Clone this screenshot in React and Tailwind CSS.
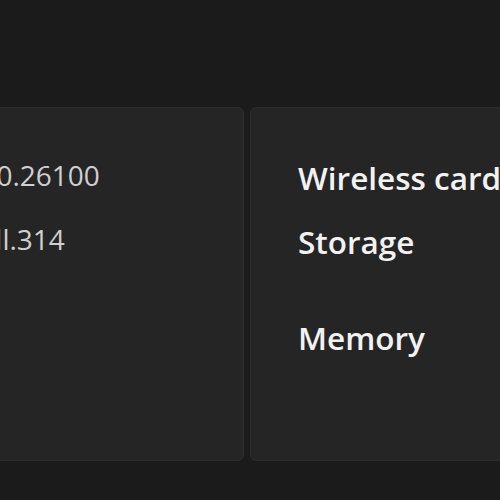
export default function App() {
  return (
    <div
      className="w-[500px] h-[500px] overflow-hidden bg-[#1b1b1b] pt-[107px]"
      style={{ fontFamily: '"Open Sans", "Noto Sans", sans-serif' }}
    >
      <div className="flex gap-[6px] h-[354px]">
        {/* Left card: build info, clipped by the window edge */}
        <div className="-ml-[120px] w-[364px] shrink-0 rounded-md bg-[#252525] border border-[#2c2c2c] pt-[52px] pl-[76px]">
          <div className="flex flex-col gap-[34px] text-[28px] leading-[30px] text-[#cfcfcf]">
            <span className="whitespace-nowrap">10.0.26100</span>
            <span className="whitespace-nowrap">HAll.314</span>
          </div>
        </div>

        {/* Right card: hardware list */}
        <div className="w-[300px] shrink-0 rounded-md bg-[#252525] border border-[#2c2c2c] pt-[53px] pl-[47px]">
          <div className="flex flex-col text-[31.5px] leading-[34px] font-semibold text-[#f2f2f2] whitespace-nowrap">
            <span>Wireless card</span>
            <span className="mt-[30px]">Storage</span>
            <span className="mt-[62px]">Memory</span>
          </div>
        </div>
      </div>
    </div>
  );
}
